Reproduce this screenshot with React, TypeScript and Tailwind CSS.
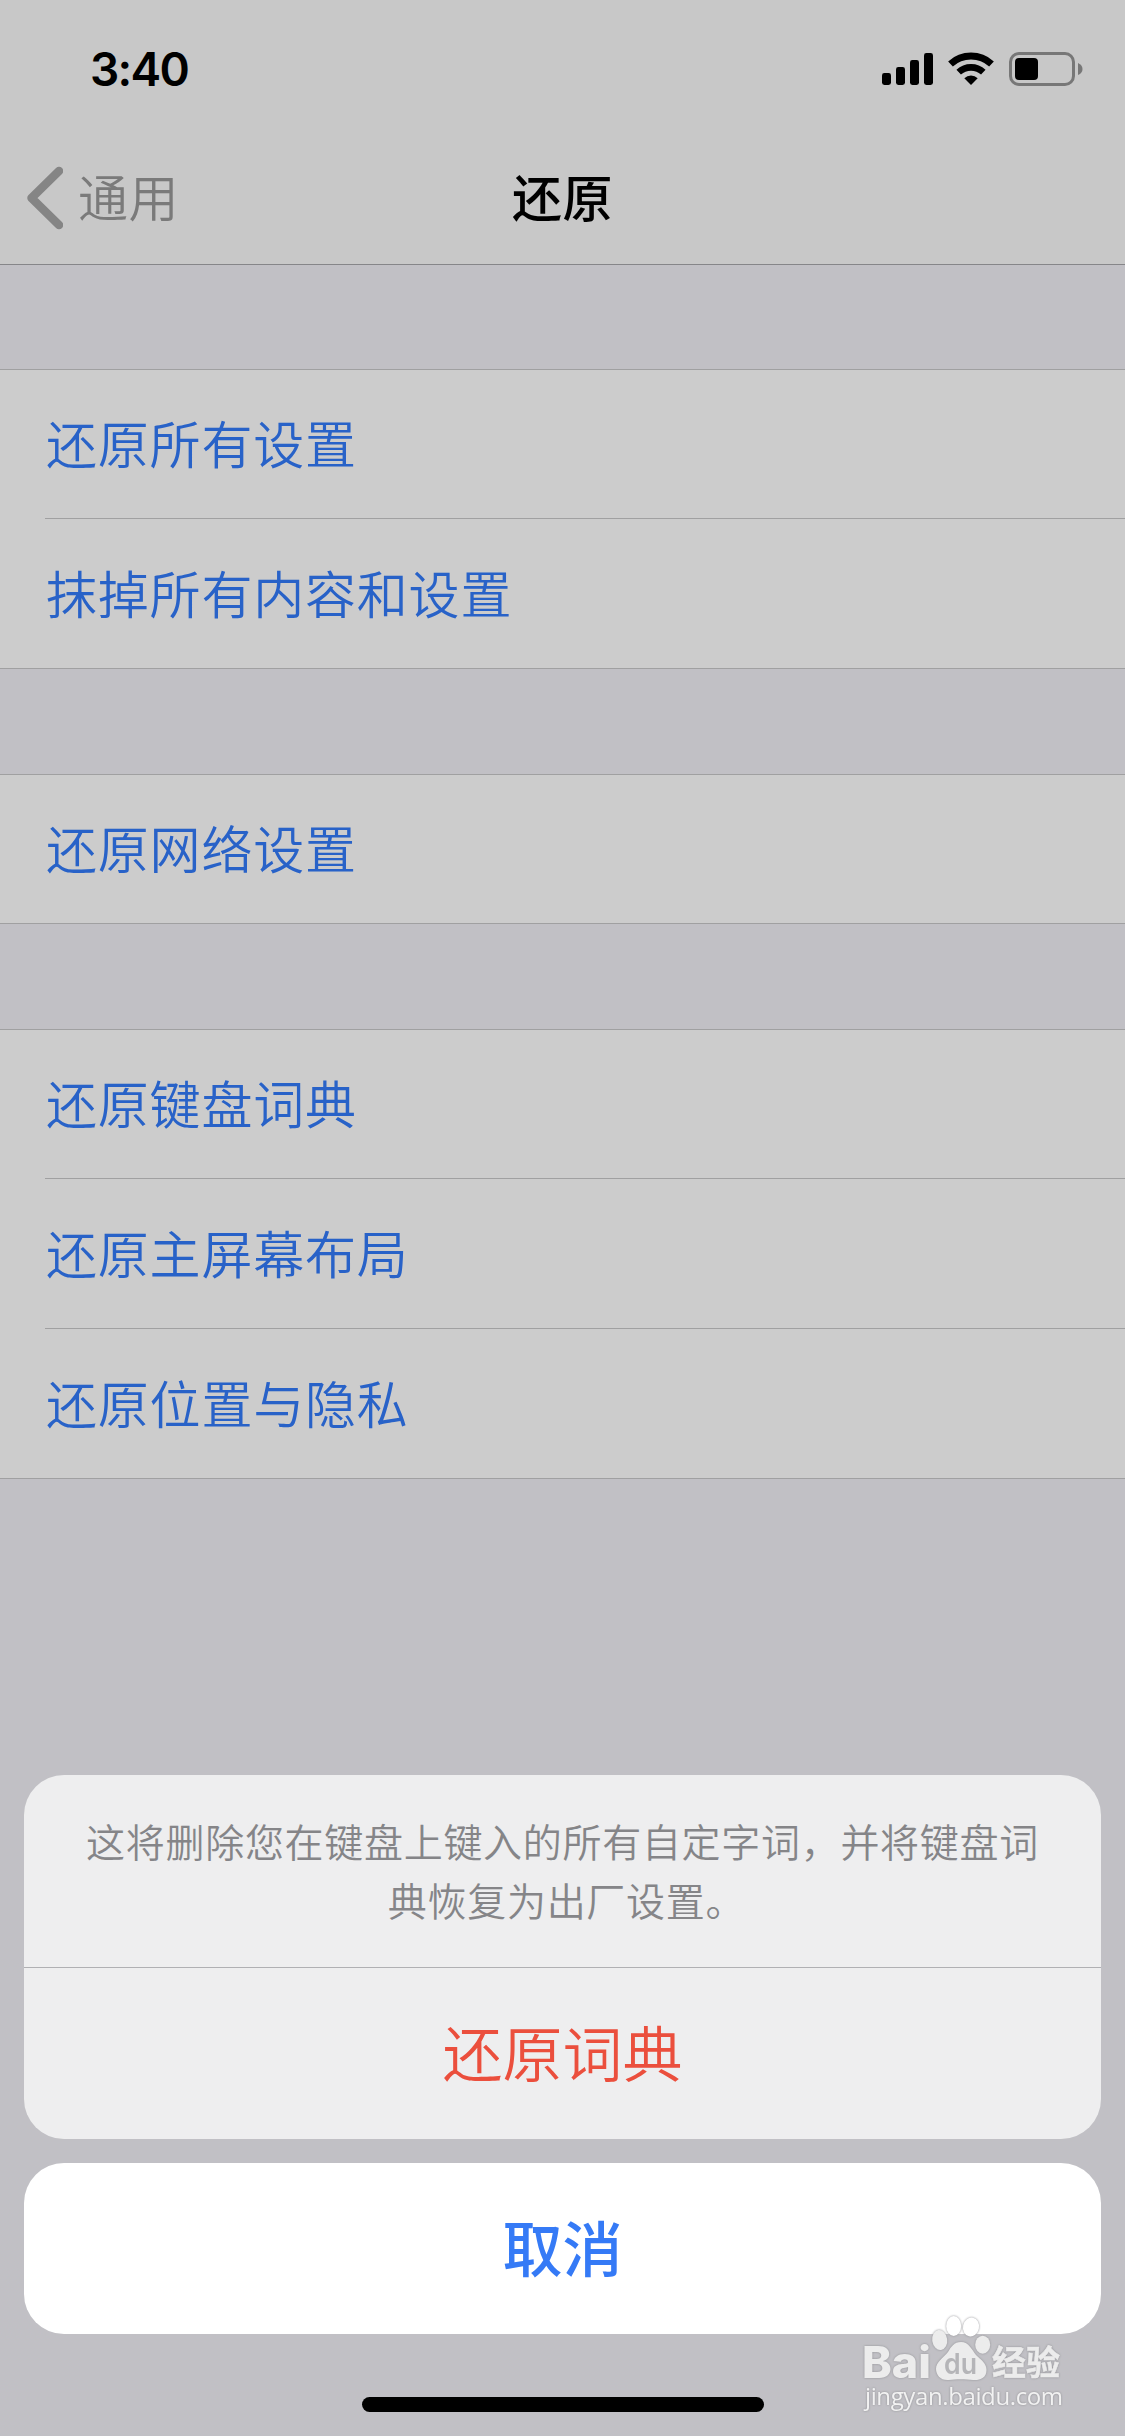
interface RowGroup {
  id: string;
  items: string[];
}

const groups: RowGroup[] = [
  { id: 'all', items: ['还原所有设置', '抹掉所有内容和设置'] },
  { id: 'network', items: ['还原网络设置'] },
  { id: 'misc', items: ['还原键盘词典', '还原主屏幕布局', '还原位置与隐私'] },
];

const StatusIcons = () => (
  <svg className="h-[34px] w-[201px]" viewBox="0 0 201 34">
    {/* signal */}
    <rect x="0" y="21" width="9" height="12" rx="2.4" />
    <rect x="14" y="15" width="9" height="18" rx="2.4" />
    <rect x="28" y="8" width="9" height="25" rx="2.4" />
    <rect x="42" y="1" width="9" height="32" rx="2.4" />
    {/* wifi */}
    <g fill="none" stroke="#000">
      <path d="M68.5 12A30.5 30.5 0 0 1 109.5 12" strokeWidth="7" />
      <path d="M76.7 20.2A18 18 0 0 1 101.3 20.2" strokeWidth="6.6" />
    </g>
    <path d="M89 33L82.3 26.2A10 10 0 0 1 95.7 26.2Z" />
    {/* battery */}
    <rect x="128.5" y="1.5" width="63" height="31" rx="8.5" fill="none" stroke="#777" strokeWidth="3" />
    <rect x="133" y="6" width="23" height="22" rx="4" />
    <path d="M196 11Q200.500 13 200.500 17Q200.500 21 196 23Z" fill="#777" />
  </svg>
);

const NavBar = () => (
  <header className="h-[265px] border-b border-[#868689] bg-[#c8c8c8]">
    <div className="flex h-[132px] items-start justify-between pl-[90px] pr-[42px] pt-[52px]">
      <span className="font-['Inter'] text-[46px] font-semibold leading-[34px] tracking-[-1.7px] text-black">3:40</span>
      <StatusIcons />
    </div>
    <div className="grid h-[132px] grid-cols-3 items-center">
      <div className="flex items-center pl-[26px] text-[50px] font-[350] tracking-[0.5px] text-[#7a7a7a]">
        <svg className="h-[64px] w-[37px]" viewBox="0 0 37 64" fill="none">
          <path d="M33 5L5.500 32L33 59" stroke="#858585" strokeWidth="8.500" strokeLinecap="round" strokeLinejoin="round" />
        </svg>
        <span className="ml-[15px] pb-[7px] leading-[70px]">通用</span>
      </div>
      <h1 className="pb-[7px] text-center text-[50px] font-medium leading-[70px] tracking-[0.5px] text-black">还原</h1>
    </div>
  </header>
);

const SettingsGroup = ({ items }: { items: string[] }) => (
  <section className="border-y border-[#a0a0a1] bg-[#ccc] pl-[45px]">
    {items.map((item, index) => (
      <div
        key={item}
        className={
          index === 0
            ? 'flex h-[148px] items-center pb-[3px] pl-px text-[51px] font-[350] tracking-[0.8px] text-[#2862c8]'
            : 'flex h-[150px] items-center border-t border-[#a0a0a1] pb-[2px] pl-px text-[51px] font-[350] tracking-[0.8px] text-[#2862c8]'
        }
      >
        {item}
      </div>
    ))}
  </section>
);

const Watermark = () => (
  <div className="absolute left-[863px] top-[2314px] h-[100px] w-[202px]">
    <svg className="h-full w-full overflow-visible drop-shadow-[0_0_1px_#909094]" viewBox="0 0 202 100" fill="#ececec">
      <text x="-1" y="64" fontFamily="Inter" fontWeight="800" fontSize="44" textLength="69" lengthAdjust="spacingAndGlyphs">Bai</text>
      <ellipse cx="76.700" cy="26" rx="7.500" ry="10" transform="rotate(-8 76.700 26)" />
      <ellipse cx="90.700" cy="12" rx="7.500" ry="10" fill="#fff" />
      <ellipse cx="108" cy="13" rx="8" ry="9.500" transform="rotate(12 108 13)" fill="#fff" />
      <ellipse cx="119.700" cy="30.700" rx="7.500" ry="9" />
      <path d="M98 28C106 28 109 36 113 41C118 46 123.500 49 123.500 56C123.500 64 117 66.500 110 66C103 65 92 65 86 66C78 67 73 61 73 55C73 48 80 44 85 38C88 33 91 28 98 28Z" />
      <text x="81" y="59.500" fontFamily="Inter" fontWeight="600" fontSize="28" fill="#b5b5b8" textLength="33" lengthAdjust="spacingAndGlyphs">du</text>
      <text x="129" y="61" fontFamily="'Noto Sans CJK SC'" fontWeight="700" fontSize="34" stroke="#ececec" strokeWidth="0.5" textLength="68" lengthAdjust="spacingAndGlyphs">经验</text>
      <text x="2" y="91" fontFamily="Open Sans" fontSize="24" fill="#f2f2f2" textLength="198">jingyan.baidu.com</text>
    </svg>
  </div>
);

const ActionSheet = () => (
  <div className="absolute inset-x-[24px] top-[1775px] flex flex-col gap-[24px]">
    <div className="overflow-hidden rounded-[40px] bg-[#eeeeef] text-center">
      <p className="h-[192px] whitespace-nowrap pt-[36px] text-[39px] font-[350] leading-[59px] tracking-[0.7px] text-[#858588]">
        {'这将删除您在键盘上键入的所有自定字词\uff0c并将键盘词'}
        <span className="block pl-[8px]">典恢复为出厂设置。</span>
      </p>
      <button className="block h-[172px] w-full border-t border-[#b0b0b3] pb-[6px] text-[60px] font-[350] text-[#eb4f3d]">
        还原词典
      </button>
    </div>
    <button className="h-[171px] rounded-[40px] bg-white pb-[6px] text-[60px] font-medium text-[#357af6]">取消</button>
  </div>
);

export default function App() {
  return (
    <div className="relative h-[2436px] w-[1125px] overflow-hidden bg-[#c1c0c5] font-['Noto_Sans_CJK_SC',sans-serif]">
      <NavBar />
      <main className="flex flex-col gap-[105px] pt-[104px]">
        {groups.map((group) => (
          <SettingsGroup key={group.id} items={group.items} />
        ))}
      </main>
      <ActionSheet />
      <div className="absolute left-[362px] top-[2397px] h-[15px] w-[402px] rounded-full bg-black" />
      <Watermark />
    </div>
  );
}
